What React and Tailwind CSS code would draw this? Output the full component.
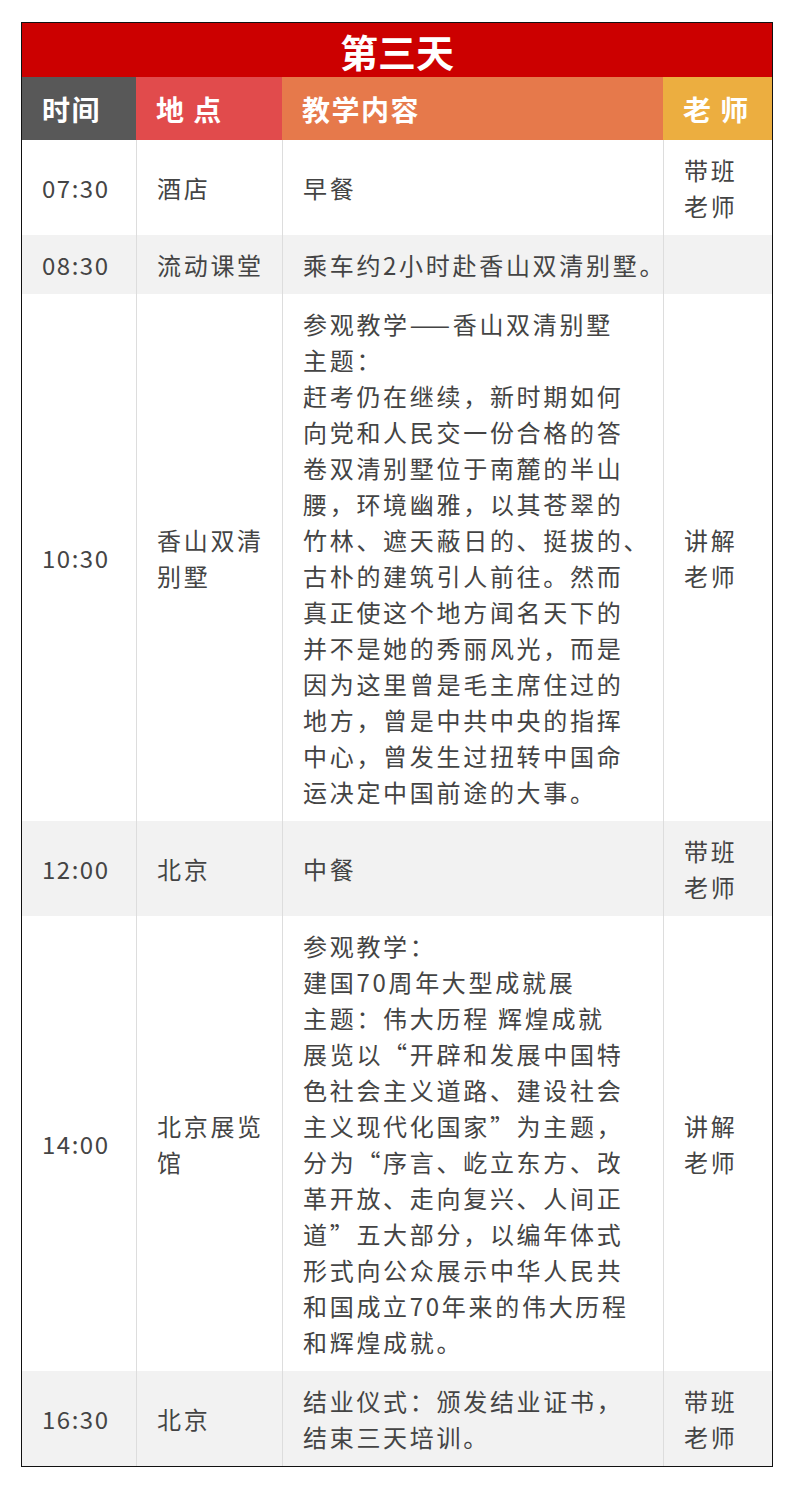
const rows = [
  { time: '07:30', place: ['酒店'], content: ['早餐'], teacher: ['带班', '老师'] },
  { time: '08:30', place: ['流动课堂'], content: ['乘车约2小时赴香山双清别墅。'], teacher: [] },
  {
    time: '10:30',
    place: ['香山双清', '别墅'],
    content: [
      '参观教学——香山双清别墅',
      '主题：',
      '赶考仍在继续，新时期如何',
      '向党和人民交一份合格的答',
      '卷双清别墅位于南麓的半山',
      '腰，环境幽雅，以其苍翠的',
      '竹林、遮天蔽日的、挺拔的、',
      '古朴的建筑引人前往。然而',
      '真正使这个地方闻名天下的',
      '并不是她的秀丽风光，而是',
      '因为这里曾是毛主席住过的',
      '地方，曾是中共中央的指挥',
      '中心，曾发生过扭转中国命',
      '运决定中国前途的大事。',
    ],
    teacher: ['讲解', '老师'],
  },
  { time: '12:00', place: ['北京'], content: ['中餐'], teacher: ['带班', '老师'] },
  {
    time: '14:00',
    place: ['北京展览', '馆'],
    content: [
      '参观教学：',
      '建国70周年大型成就展',
      '主题：伟大历程 辉煌成就',
      '展览以“开辟和发展中国特',
      '色社会主义道路、建设社会',
      '主义现代化国家”为主题，',
      '分为“序言、屹立东方、改',
      '革开放、走向复兴、人间正',
      '道”五大部分，以编年体式',
      '形式向公众展示中华人民共',
      '和国成立70年来的伟大历程',
      '和辉煌成就。',
    ],
    teacher: ['讲解', '老师'],
  },
  {
    time: '16:30',
    place: ['北京'],
    content: ['结业仪式：颁发结业证书，', '结束三天培训。'],
    teacher: ['带班', '老师'],
  },
]

const Lines = ({ lines }) => (
  <div>
    {lines.map((l, i) => (
      <div key={i} className="whitespace-nowrap">{l}</div>
    ))}
  </div>
)

export default function App() {
  return (
    <div className="min-h-[1494px] bg-white pt-[22px] pl-[21px] font-['Noto_Sans_CJK_SC',sans-serif]">
      <div className="w-[752px] border border-[#111]">
        <div className="h-[54px] bg-[#cc0000] flex items-center justify-center text-white text-[38px] font-bold leading-none pt-[2px]">
          第三天
        </div>
        <div className="grid grid-cols-[114px_146px_381px_109px] h-[63px] text-white text-[28px] font-bold tracking-[1.5px] leading-none">
          <div className="bg-[#585858] flex items-center pl-5">时间</div>
          <div className="bg-[#e14b4c] flex items-center pl-5">地 点</div>
          <div className="bg-[#e6794b] flex items-center pl-5">教学内容</div>
          <div className="bg-[#ecae40] flex items-center pl-5">老 师</div>
        </div>
        {rows.map((r, i) => (
          <div
            key={r.time}
            className={`grid grid-cols-[114px_146px_381px_109px] text-[24px] leading-[36px] tracking-[2.7px] text-[#444] ${i % 2 === 1 ? 'bg-[#f2f2f2]' : 'bg-white'}`}
          >
            <div className="flex items-center pl-5 py-[11.5px] tracking-[1.5px]">{r.time}</div>
            <div className="flex items-center pl-5 py-[11.5px] border-l border-[#dddddd]">
              <Lines lines={r.place} />
            </div>
            <div className="flex items-center pl-5 py-[11.5px] border-l border-[#dddddd]">
              <Lines lines={r.content} />
            </div>
            <div className="flex items-center pl-5 py-[11.5px] border-l border-[#dddddd]">
              <Lines lines={r.teacher} />
            </div>
          </div>
        ))}
      </div>
    </div>
  )
}
